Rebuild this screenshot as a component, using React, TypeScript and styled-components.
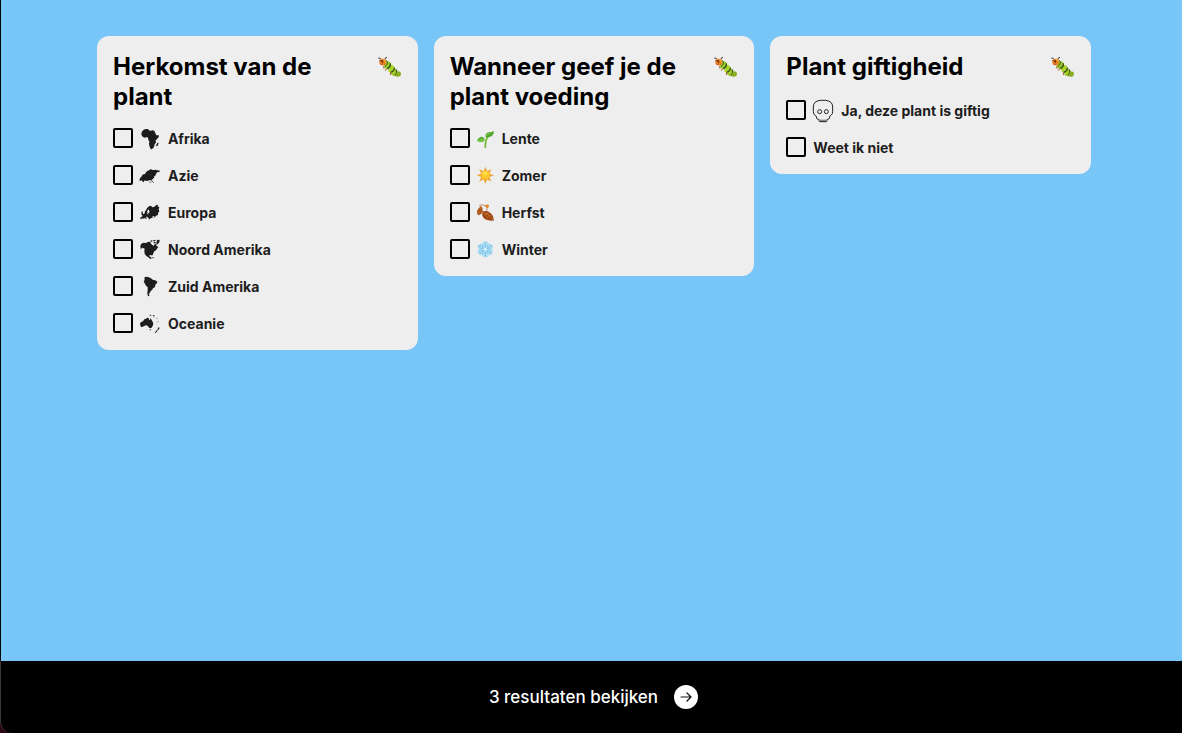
import React from "react";
import styled, { createGlobalStyle } from "styled-components";

const GlobalStyle = createGlobalStyle`
  *, *::before, *::after { box-sizing: border-box; }
  body {
    margin: 0;
    background: #2a0610;
    font-family: Inter, "Liberation Sans", sans-serif;
    color: #000;
  }
`;

const Page = styled.div`
  min-height: 100vh;
  display: flex;
  flex-direction: column;
`;

const Main = styled.main`
  flex: 1;
  padding: 36px 91px 36px 96px;
  background: #78c6f7;
  border-left: 1px solid #050505;
`;

const Cards = styled.form`
  display: grid;
  grid-template-columns: repeat(3, minmax(0, 1fr));
  align-items: start;
  gap: 16px;
`;

const Card = styled.section`
  display: flex;
  flex-direction: column;
  gap: 16px;
  padding: 16px;
  border-radius: 12px;
  background: #eee;
`;

const CardHeader = styled.header`
  display: flex;
  align-items: flex-start;
  justify-content: space-between;
  gap: 16px;
`;

const Title = styled.h2`
  margin: 0;
  font-size: 24px;
  line-height: 30px;
  font-weight: 700;
`;

const TitleIcon = styled.span`
  display: flex;
  align-items: center;
  flex: none;
  height: 32px;
`;

const Options = styled.ul`
  display: flex;
  flex-direction: column;
  gap: 16px;
  margin: 0;
  padding: 0;
  list-style: none;
`;

const Option = styled.li`
  display: flex;
  align-items: flex-start;
  gap: 7px;
  height: 21px;
`;

const Checkbox = styled.input`
  appearance: none;
  flex: none;
  width: 20px;
  height: 20px;
  margin: 0;
  border: 2px solid #000;
  border-radius: 2px;
  cursor: pointer;

  &:checked {
    background: #000;
    box-shadow: inset 0 0 0 2px #eee;
  }
`;

const OptionLabel = styled.label`
  display: flex;
  align-items: center;
  gap: 8px;
  height: 21px;
  color: #1d1d1d;
  font-size: 14px;
  line-height: 21px;
  font-weight: 700;
  cursor: pointer;
`;

const Icon = styled.svg<{ $width: number; $height: number }>`
  display: block;
  flex: none;
  width: ${(p) => p.$width}px;
  height: ${(p) => p.$height}px;
  overflow: visible;
`;

const Footer = styled.footer`
  display: flex;
  justify-content: center;
  padding: 12px 0 12px 4px;
  background: #000;
  border-left: 1px solid #383838;
  border-bottom-left-radius: 12px;
`;

const ResultsButton = styled.button`
  display: flex;
  align-items: center;
  gap: 16px;
  height: 48px;
  padding: 0;
  border: 0;
  background: none;
  color: #fff;
  font: 500 17px/24px Inter, "Liberation Sans", sans-serif;
  cursor: pointer;
`;

const Caterpillar = () => (
  <Icon viewBox="354 60 72 72" $width={24} $height={24} aria-hidden="true">
    <g stroke="#a5532b" strokeWidth="3" strokeLinecap="round">
      <path d="M371 91l1 6M379 99l-2 4M391 110l1 6" />
    </g>
    <ellipse cx="413" cy="114" rx="10" ry="8" fill="#86ad20" />
    <ellipse cx="403" cy="109" rx="10" ry="11" fill="#9fca2b" />
    <path d="M409 100q4 9-4 19" stroke="#3c5514" strokeWidth="3" fill="none" />
    <ellipse cx="394" cy="98" rx="10" ry="11" fill="#a9d52e" />
    <path d="M403 95q1 10-11 14" stroke="#344b13" strokeWidth="4" fill="none" />
    <ellipse cx="382" cy="87" rx="11" ry="11" fill="#9ac52a" />
    <path d="M391 82q2 11-10 16" stroke="#344b13" strokeWidth="4" fill="none" />
    <path d="M379 73q8 9-4 18" stroke="#3c5514" strokeWidth="3" fill="none" />
    <path d="M364 71q-2-6-8-5M375 70q-1-6 5-6" stroke="#43403a" strokeWidth="3" fill="none" strokeLinecap="round" />
    <ellipse cx="368" cy="78" rx="10" ry="10" fill="#ef7e1c" />
    <ellipse cx="372" cy="74" rx="5" ry="4" fill="#f9a52e" />
    <ellipse cx="367" cy="76" rx="3" ry="4" fill="#57301b" />
    <circle cx="360" cy="74" r="2" fill="#57301b" />
    <path d="M361 84q4 3 8 0" stroke="#b8351a" strokeWidth="2" fill="none" />
  </Icon>
);

const Continent = ({ viewBox, d }: { viewBox: string; d: string }) => (
  <Icon viewBox={viewBox} $width={20} $height={20} fill="#1d1d1d" aria-hidden="true">
    <path d={d} />
  </Icon>
);

const Africa = () => (
  <Continent
    viewBox="90 27 60 60"
    d="M101 29l6-2 7 0 2 3 6 3 4-2 7 1 3 8 3 6 7 0 1 3-5 7-5 5 1 7-4 4-1 6-3 6-5 4-3-1-3-7-2-8 1-7-3-6-1-6-3-2-7 2-6-3-4-6 1-8zM143 68l3 1-3 8-3 2-2-3z"
  />
);

const Asia = () => (
  <Continent
    viewBox="90 138 60 60"
    d="M91 173l5-5 1-4 8-2 3-5 5-5 6-2 3-3 5 3 6 0 4-1 5 2 8 1-2 4-7 1-3 5-2 5-3 1-1 6-5 4-3 4-4-2-6 2-5 1-5-2-3 6-4-3-3-3-4 2-2-3zM117 184l3 1 3 4-3-1zM125 182h3v4h-3zM130 186h2v2h-2z"
  />
);

const Europe = () => (
  <Continent
    viewBox="90 249 60 60"
    d="M91 296l1-5 5-1-1-3 4-4 4-3 1-6 3-3 2-5 5-6 5-3 4 2 4 3 4-1 4-3 3-3 5-1-1 5 5 3-2 6 2 6-4 5 0 6-6 2-3 5-6-1-3 3-5 1-2 4-4-5-3-4-4 1 2 5-2 2-3-5-3 3-6-1-3 3zM94 276l4-2 0 5 3 5-6 1z M116 268l-5 6 2 4-2 4 3 1 2-5 3-1-1-3z M127 292l7-1-2-3-4 1z"
  />
);

const NorthAmerica = () => (
  <Continent
    viewBox="90 30 60 60"
    d="M91 47l3-6 6-3 8 1 5-3 7-1 3 6 4 4 4 3 2-5 4-1 3 6 5 3-4 5-3 5-5 3-3 6-2 6-4 0-5-1-1 4 4 2 3 5-4 1-6-5-6-4-5-7-1-9 1-6-6-3-6 4zM121 32l5-1 2 3-5 2zM129 31l8-2-1 4-5 1zM130 37l5-2 3 3-3 3zM140 32l3-3 6 1-1 7-4 4-4 4-1-5 1-4zM124 83l6-1 3 2-6 1z"
  />
);

const SouthAmerica = () => (
  <Continent
    viewBox="90 141 60 60"
    d="M103 143l4-3 7 1 6 2 6 4 3 3 7 1 6 4-1 4-5 5-1 7-6 4-3 5-4 3-2 5-3 2 1 5-1 4-3-1-2-7 1-11 0-8-5-5-4-7-3-5 3-6z"
  />
);

const Oceania = () => (
  <Continent
    viewBox="90 252 60 60"
    d="M90 281l3-5 6-2 4-6 5-2 4-3 5 1-1 4 4 3 2-7 3 6 3 5 2 6-2 7-4 6-6 0-4-5-5-3-7 2-5 3-5-1zM118 298h5l-2 4zM118 254l4 0 3 3-5 0zM128 255h5v3h-3zM130 260h4v2h-4zM140 264h2v2h-2zM143 274h2v2h-2zM139 277h1v2h-1zM146 291l3 3-4 6-3-1zM141 299l2 3-6 7-3 0z"
  />
);

const Seedling = () => (
  <Icon viewBox="94 31 51 54" $width={17} $height={18} aria-hidden="true">
    <path d="M119 83q-1-21 9-34" stroke="#76b82d" strokeWidth="5" fill="none" strokeLinecap="round" />
    <path d="M117 61q-3-12-13-9-7 3-10 12 14 6 22-1z" fill="#55ae2e" />
    <path d="M96 63q9-8 20-3-8 8-20 3z" fill="#7cca3d" />
    <path d="M120 53q-2-12 8-15 9 0 17-4 0 10-7 15-8 5-18 4z" fill="#4ba52b" />
    <path d="M122 50q8-9 20-12-7 0-14 2-6 3-6 10z" fill="#85cf45" />
  </Icon>
);

const Sun = () => (
  <Icon viewBox="95 143 51 51" $width={17} $height={17} aria-hidden="true">
    {[0, 45, 90, 135, 180, 225, 270, 315].map((angle) => (
      <path key={angle} transform={`rotate(${angle} 120 168)`} d="M120 142l5 13h-10z" fill="#f0a63a" />
    ))}
    <circle cx="120" cy="168" r="14" fill="#f5a823" />
    <circle cx="120" cy="167" r="12" fill="#fdc72e" />
    <ellipse cx="119" cy="162" rx="7" ry="6" fill="#ffe04a" />
  </Icon>
);

const Leaves = () => (
  <Icon viewBox="94 255 51 51" $width={17} $height={17} aria-hidden="true">
    <path d="M100 260q12-7 24 5l-1 16" stroke="#ae6530" strokeWidth="2" fill="none" />
    <path d="M118 258q7-3 12 0 1 6-4 10-8-3-8-10z" fill="#e48a23" />
    <path d="M106 260q-9 9-12 17-1 9 5 12 11-3 12-15 0-9-5-14z" fill="#a95117" />
    <path d="M105 263q-1 13-6 23" stroke="#d57d32" strokeWidth="2" fill="none" />
    <path d="M111 277q-4 12 3 20 10 9 30 8 0-15-9-22-10-10-24-6z" fill="#9c4615" />
    <path d="M112 279q19 8 31 25M121 283l8 1M127 288l9 1M118 285l1 7M126 292l1 6" stroke="#d27a34" strokeWidth="2" fill="none" />
  </Icon>
);

const Snowflake = () => (
  <Icon viewBox="95 365 51 51" $width={17} $height={17} aria-hidden="true">
    <circle cx="120" cy="390" r="23" fill="#c8e9f8" />
    <g stroke="#7cc5ea" strokeWidth="3" fill="none" strokeLinecap="round">
      {[0, 60, 120, 180, 240, 300].map((angle) => (
        <path key={angle} transform={`rotate(${angle} 120 390)`} d="M120 390v-23M115 369l5 5 5-5M112 375l8 8 8-8" />
      ))}
    </g>
    <circle cx="120" cy="390" r="4" fill="#e9f8fd" />
  </Icon>
);

const Skull = () => (
  <Icon viewBox="99 177 60 66" $width={20} $height={22} fill="none" stroke="#222" strokeWidth="3" strokeLinejoin="round" aria-hidden="true">
    <path d="M121 178h16q21 2 21 20v13q0 9-5 12l-4 3-1 6q-1 3-5 3h-2v4q0 3-3 3h-18q-3 0-3-3v-4h-2q-4 0-5-3l-1-6-4-3q-5-3-5-12v-13q0-18 21-20z" />
    <circle cx="119" cy="212" r="6" />
    <circle cx="139" cy="212" r="6" />
    <path d="M123 242v-6M129 242v-6M135 242v-6" />
  </Icon>
);

const ArrowCircle = () => (
  <Icon viewBox="0 0 24 24" $width={24} $height={24} aria-hidden="true">
    <circle cx="12" cy="12" r="12" fill="#fff" />
    <path d="M7 12h10M13 8l4 4-4 4" fill="none" stroke="#111" strokeWidth="1.2" strokeLinecap="round" strokeLinejoin="round" />
  </Icon>
);

type FilterOption = { id: string; label: string; icon?: React.ReactNode };
type FilterGroup = { id: string; title: string; options: FilterOption[] };

const groups: FilterGroup[] = [
  {
    id: "herkomst",
    title: "Herkomst van de plant",
    options: [
      { id: "afrika", label: "Afrika", icon: <Africa /> },
      { id: "azie", label: "Azie", icon: <Asia /> },
      { id: "europa", label: "Europa", icon: <Europe /> },
      { id: "noord-amerika", label: "Noord Amerika", icon: <NorthAmerica /> },
      { id: "zuid-amerika", label: "Zuid Amerika", icon: <SouthAmerica /> },
      { id: "oceanie", label: "Oceanie", icon: <Oceania /> },
    ],
  },
  {
    id: "voeding",
    title: "Wanneer geef je de plant voeding",
    options: [
      { id: "lente", label: "Lente", icon: <Seedling /> },
      { id: "zomer", label: "Zomer", icon: <Sun /> },
      { id: "herfst", label: "Herfst", icon: <Leaves /> },
      { id: "winter", label: "Winter", icon: <Snowflake /> },
    ],
  },
  {
    id: "giftigheid",
    title: "Plant giftigheid",
    options: [
      { id: "giftig", label: "Ja, deze plant is giftig", icon: <Skull /> },
      { id: "weet-ik-niet", label: "Weet ik niet" },
    ],
  },
];

export default function App() {
  return (
    <Page>
      <GlobalStyle />
      <Main>
        <Cards id="filters">
          {groups.map((group) => (
            <Card key={group.id} aria-labelledby={group.id}>
              <CardHeader>
                <Title id={group.id}>{group.title}</Title>
                <TitleIcon>
                  <Caterpillar />
                </TitleIcon>
              </CardHeader>
              <Options>
                {group.options.map((option) => (
                  <Option key={option.id}>
                    <Checkbox type="checkbox" id={option.id} name={group.id} value={option.id} />
                    <OptionLabel htmlFor={option.id}>
                      {option.icon}
                      {option.label}
                    </OptionLabel>
                  </Option>
                ))}
              </Options>
            </Card>
          ))}
        </Cards>
      </Main>
      <Footer>
        <ResultsButton type="submit" form="filters">
          3 resultaten bekijken
          <ArrowCircle />
        </ResultsButton>
      </Footer>
    </Page>
  );
}
